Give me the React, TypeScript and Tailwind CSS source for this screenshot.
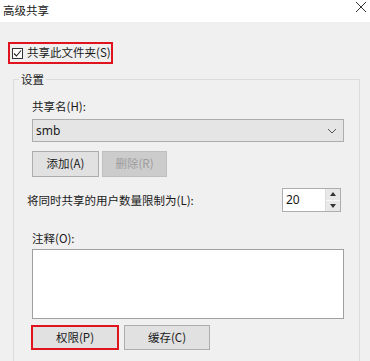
import React from 'react';

const font = { fontFamily: '"Noto Sans CJK SC", "Noto Sans", sans-serif' };

function Btn({ children, disabled, red, className = '' }: { children: React.ReactNode; disabled?: boolean; red?: boolean; className?: string }) {
  return (
    <div
      className={`flex items-center justify-center text-[11.5px] leading-none ${
        disabled
          ? 'bg-[#cccccc] border border-[#bfbfbf] text-[#9c9c9c]'
          : red
          ? 'bg-[#e1e1e1] border-2 border-[#e0141e] text-[#1a1a1a]'
          : 'bg-[#e1e1e1] border border-[#adadad] text-[#1a1a1a]'
      } ${className}`}
    >
      {children}
    </div>
  );
}

export default function App() {
  return (
    <div className="w-[370px] h-[361px] overflow-hidden bg-[#f0f0f0] flex flex-col text-[#1a1a1a]" style={font}>
      <div className="h-[22px] bg-white flex items-center justify-between pl-[3px] pr-[3px] shrink-0">
        <span className="text-[11.5px] leading-none">高级共享</span>
        <svg width="12" height="12" viewBox="0 0 12 12" className="mb-[8px]">
          <path d="M1 1L11 11M11 1L1 11" stroke="#333" strokeWidth="1" />
        </svg>
      </div>

      <div className="flex flex-col px-[8px] pt-[20px]">
        <div className="w-[105px] h-[22px] border-2 border-[#e0141e] flex items-center pl-[2px]">
          <div className="w-[11px] h-[11px] border border-[#333] bg-white flex items-center justify-center">
            <svg width="9" height="9" viewBox="0 0 9 9">
              <path d="M1 4.5L3.5 7L8 1.5" stroke="#222" strokeWidth="1.1" fill="none" />
            </svg>
          </div>
          <span className="ml-[4px] text-[11.5px] leading-none">共享此文件夹(S)</span>
        </div>

        <fieldset className="mt-[7px] ml-[5px] w-[347px] border border-[#dcdcdc] pl-[18px] pr-[15px] pb-[20px]">
          <legend className="ml-[-13px] px-[2px] text-[11.5px] leading-[16px]">设置</legend>

          <div className="mt-[11px] text-[11.5px] leading-[16px]">共享名(H):</div>

          <div className="mt-[5px] h-[23px] bg-[#e5e5e5] border border-[#adadad] flex items-center justify-between pl-[3px] pr-[6px]">
            <span className="text-[12px] leading-none" style={{ fontFamily: '"Noto Sans", sans-serif' }}>smb</span>
            <svg width="10" height="6" viewBox="0 0 10 6">
              <path d="M1 1L5 5L9 1" stroke="#555" strokeWidth="1" fill="none" />
            </svg>
          </div>

          <div className="mt-[9px] flex gap-[3px]">
            <Btn className="w-[67px] h-[26px]">添加(A)</Btn>
            <Btn disabled className="w-[65px] h-[26px]">删除(R)</Btn>
          </div>

          <div className="mt-[11px] flex items-center justify-between ml-[-5px] pr-[3px]">
            <span className="text-[11.5px] leading-[16px]">将同时共享的用户数量限制为(L):</span>
            <div className="w-[59px] h-[24px] border border-[#adadad] bg-white flex">
              <span className="flex-1 pl-[3px] text-[12px] leading-[22px]" style={{ fontFamily: '"Noto Sans", sans-serif' }}>20</span>
              <div className="w-[15px] flex flex-col border-l border-[#dcdcdc]">
                <div className="flex-1 bg-[#e8e8e8] border-b border-[#f8f8f8] flex items-center justify-center">
                  <svg width="6" height="4" viewBox="0 0 6 4"><path d="M0 4L3 0L6 4Z" fill="#333" /></svg>
                </div>
                <div className="flex-1 bg-[#e8e8e8] flex items-center justify-center">
                  <svg width="6" height="4" viewBox="0 0 6 4"><path d="M0 0L3 4L6 0Z" fill="#333" /></svg>
                </div>
              </div>
            </div>
          </div>

          <div className="mt-[18px] text-[11.5px] leading-[16px]">注释(O):</div>
          <div className="mt-[3px] h-[70px] bg-white border border-[#a0a0a0]" />

          <div className="mt-[6px] flex items-center">
            <Btn red className="w-[88px] h-[25px] ml-[-1px]">权限(P)</Btn>
            <Btn className="w-[86px] h-[25px] ml-[5px]">缓存(C)</Btn>
          </div>
        </fieldset>
      </div>
    </div>
  );
}
